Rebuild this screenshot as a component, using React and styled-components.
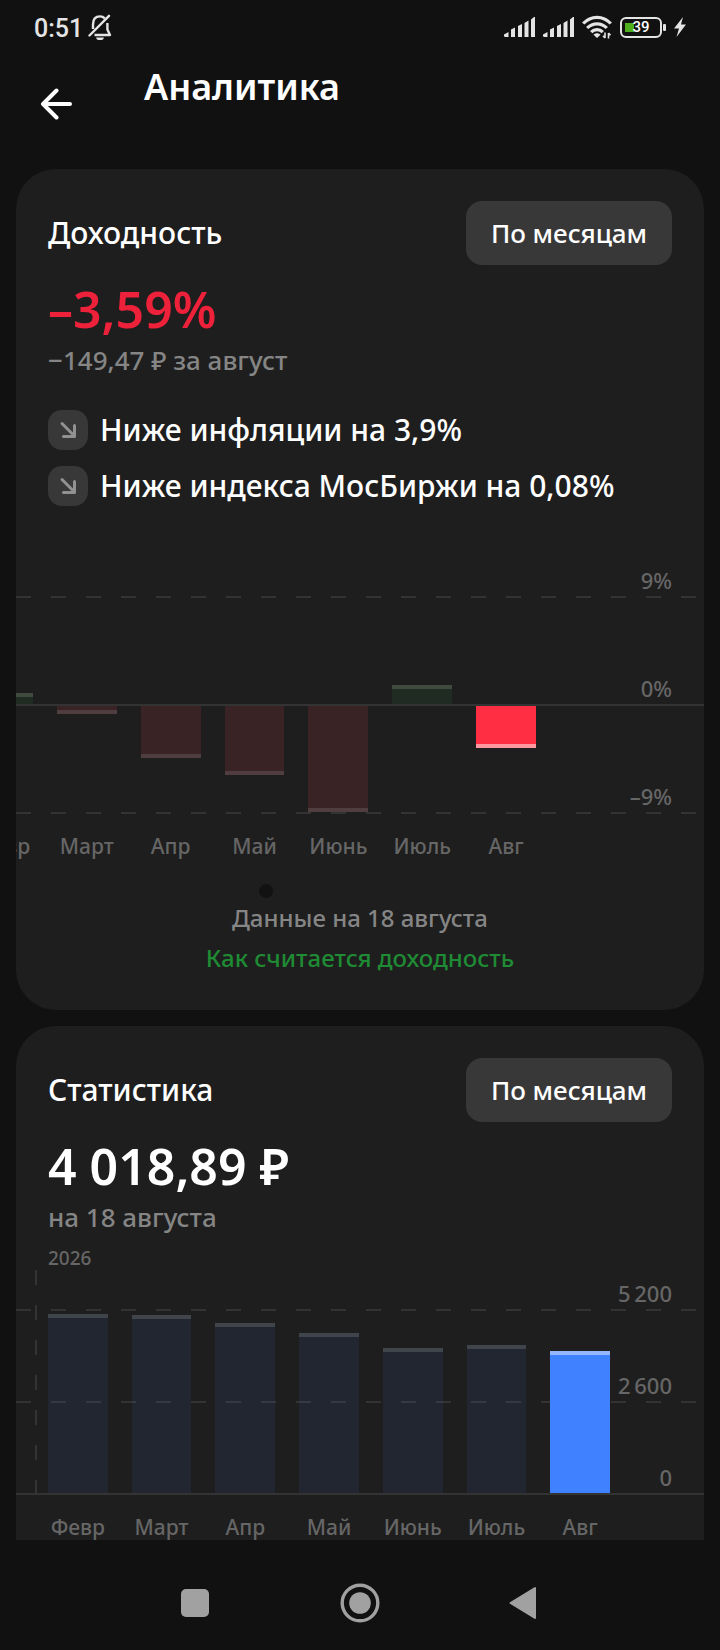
import styled, { createGlobalStyle } from 'styled-components';

const GlobalStyle = createGlobalStyle`
    * {
        box-sizing: border-box;
    }

    body {
        margin: 0;
        background: #111111;
        color: #ffffff;
        font-family: 'Noto Sans', 'Open Sans', sans-serif;
    }

    h1, h2, p {
        margin: 0;
    }

    button {
        padding: 0;
        border: 0;
        background: none;
        color: inherit;
        font-family: inherit;
        cursor: pointer;
    }
`;

const Screen = styled.div`
    display: flex;
    flex-direction: column;
    height: 100vh;
    overflow: hidden;
`;

const StatusBar = styled.div`
    display: flex;
    flex: none;
    align-items: center;
    justify-content: space-between;
    height: 54px;
    padding: 0 34px;
    color: #e4e4e4;
    font-family: Roboto, sans-serif;
`;

const StatusGroup = styled.div`
    display: flex;
    align-items: center;
    gap: ${({ $gap }) => $gap}px;
`;

const Clock = styled.span`
    font-size: 25px;
    font-weight: 500;
    line-height: 28px;
    padding-top: 4px;
`;

const BatteryLevel = styled.span`
    display: flex;
    align-items: center;
    justify-content: center;
    width: 42px;
    height: 21px;
    border: 2px solid #e4e4e4;
    border-radius: 6px;
    background: linear-gradient(#4fae1c, #4fae1c) 3px 4px / 9px 9px no-repeat;
    color: #ffffff;
    font-size: 15px;
    font-weight: 500;
    line-height: 17px;
`;

const Battery = styled.div`
    display: flex;
    align-items: center;
    gap: 1px;

    &::after {
        content: '';
        width: 3px;
        height: 7px;
        border-radius: 1px;
        background: #e4e4e4;
    }
`;

const Header = styled.header`
    display: flex;
    flex: none;
    height: 115px;
    padding: 0 32px;
`;

const BackButton = styled.button`
    display: flex;
    align-items: center;
    justify-content: center;
    width: 48px;
    height: 100px;
`;

const PageTitle = styled.h1`
    padding: 13px 0 0 64px;
    font-size: 36px;
    font-weight: 600;
    line-height: 40px;
`;

const Content = styled.main`
    display: flex;
    flex: 1;
    flex-direction: column;
    gap: 16px;
    min-height: 0;
    padding: 0 16px;
    overflow-y: auto;
    scrollbar-width: none;
`;

const Card = styled.section`
    flex: none;
    padding: 32px 0;
    border-radius: 40px;
    background: #1e1e1e;
    overflow: hidden;
`;

const CardHeader = styled.div`
    display: flex;
    align-items: center;
    justify-content: space-between;
    margin-bottom: 16px;
    padding: 0 32px;
`;

const CardTitle = styled.h2`
    font-size: 30px;
    font-weight: 500;
    line-height: 40px;
`;

const PeriodButton = styled.button`
    min-width: 206px;
    height: 64px;
    padding: 0 24px;
    border-radius: 16px;
    background: #383838;
    font-size: 26px;
    font-weight: 500;
`;

const Amount = styled.p`
    padding: 0 32px;
    color: ${({ $negative }) => ($negative ? '#ed2139' : '#ffffff')};
    font-size: 50px;
    font-weight: 600;
    line-height: 56px;
`;

const AmountNote = styled.p`
    margin-top: 6px;
    padding: 0 32px;
    color: #858585;
    font-size: 26px;
    font-weight: 500;
    line-height: 34px;
`;

const Comparisons = styled.ul`
    display: flex;
    flex-direction: column;
    gap: 16px;
    margin: 33px 0 58px;
    padding: 0 32px;
    list-style: none;
`;

const Comparison = styled.li`
    display: flex;
    align-items: center;
    gap: 12px;
    font-size: 30px;
    font-weight: 500;
    line-height: 40px;
`;

const TrendBadge = styled.span`
    display: flex;
    flex: none;
    align-items: center;
    justify-content: center;
    width: 40px;
    height: 40px;
    border-radius: 14px;
    background: #383838;
`;

// Axis, year divider and bars share one grid cell and lie over each other
const Plot = styled.div`
    display: grid;

    > * {
        grid-area: 1 / 1;
    }
`;

const Axis = styled.div`
    display: flex;
    flex-direction: column;
`;

const AxisRow = styled.div`
    display: flex;
    align-items: flex-end;
    justify-content: flex-end;
    height: ${({ $height }) => $height}px;
    padding: 0 32px 4px;
    background: ${({ $solid }) => ($solid
        ? 'linear-gradient(#333333, #333333)'
        : 'repeating-linear-gradient(90deg, #333333 0 15px, transparent 15px 35px)')}
        0 100% / 100% 2px no-repeat;
    color: #666666;
    font-size: 22px;
    font-weight: 500;
    line-height: 28px;
`;

const YearLabel = styled.p`
    margin-top: 12px;
    padding: 0 32px;
    color: #666666;
    font-size: 19px;
    font-weight: 500;
    line-height: 24px;
`;

const YearDivider = styled.div`
    width: 2px;
    margin-left: 19px;
    background: repeating-linear-gradient(#333333 0 15px, transparent 15px 35px);
`;

const Columns = styled.div`
    display: grid;
    grid-template-columns: repeat(7, 1fr);
    gap: 24px;
    margin: ${({ $scrolled }) => ($scrolled ? '0 168px 0 -43px' : '0 94px 0 32px')};
`;

const Column = styled.div`
    display: grid;
    grid-template-rows: ${({ $rows }) => $rows};
`;

const barColors = {
    gain: { fill: '#202c23', edge: '#3e4b3e' },
    loss: { fill: '#392325', edge: '#4f3d40' },
    lossActive: { fill: '#ff2e43', edge: '#ff97a1' },
    value: { fill: 'rgba(70, 120, 220, 0.10)', edge: '#40444b' },
    valueActive: { fill: '#4081ff', edge: '#94b6fb' },
};

const Bar = styled.div`
    grid-row: ${({ $down }) => ($down ? 3 : 1)};
    align-self: ${({ $down }) => ($down ? 'start' : 'end')};
    border-style: solid;
    border-color: ${({ $kind }) => barColors[$kind].edge};
    border-width: ${({ $down }) => ($down ? '0 0 4px' : '4px 0 0')};
    background: ${({ $kind }) => barColors[$kind].fill} padding-box;
`;

const Months = styled(Columns)`
    padding-top: 20px;
    color: #666666;
    font-size: 21px;
    font-weight: 500;
    line-height: 24px;
`;

const Month = styled.span`
    display: flex;
    justify-content: center;
    min-width: 0;
    white-space: nowrap;
`;

const PagerDot = styled.div`
    width: 14px;
    height: 14px;
    margin: 26px 0 0 243px;
    border-radius: 50%;
    background: #121212;
`;

const CardFooter = styled.div`
    display: flex;
    flex-direction: column;
    align-items: center;
    min-height: 80px;
    font-size: 24px;
    font-weight: 500;
    line-height: 40px;
`;

const FooterNote = styled.p`
    color: #858585;
`;

const FooterLink = styled.a`
    color: #1f8b34;
    text-decoration: none;
`;

const NavBar = styled.nav`
    display: flex;
    flex: none;
    justify-content: center;
    height: 110px;
    padding-top: 16px;
`;

const NavButton = styled.button`
    display: flex;
    align-items: center;
    justify-content: center;
    width: 165px;
    height: 94px;
    color: #a1a1a1;
`;

const BellOffIcon = () => (
    <svg width="24" height="26" viewBox="0 0 24 26" fill="none" stroke="currentColor" strokeWidth="2.4" strokeLinejoin="round">
        <path d="M5 15V10.5C5 5.5 7.5 2.4 12 2.4c2 0 3.5.6 4.8 1.9" />
        <path d="M19.4 9v6.5l2.6 5.5H6.5" />
        <path d="M1.5 21.5 21 1.8" strokeLinecap="round" />
        <path d="M8.2 23.4h7.6a3.8 2.6 0 0 1-7.6 0z" fill="currentColor" stroke="none" />
    </svg>
);

const SignalIcon = () => (
    <svg width="31" height="20" viewBox="0 0 31 20" fill="currentColor">
        <path d="M0 19.2V17.5L4.500 15v5H1zM7 20v-7.500L11 10.500V20zM14 20V9l4-2v13zM20.500 20V6l4-2.500V20zM27 20V2.500L30 0h1v20z" />
    </svg>
);

const WifiIcon = () => (
    <svg width="30" height="24" viewBox="0 0 30 24" fill="none" stroke="currentColor" strokeWidth="3.2">
        <path d="M1.2 8.5C9 .3 21 .3 28.8 8.5" />
        <path d="M5.2 13c5.4-5.6 14.2-5.6 19.6 0" />
        <path d="M9.2 17.2c3.2-3.4 8.4-3.4 11.6 0" />
        <path d="m15 23-3.5-3.3c1.8-2 5.2-2 7 0z" fill="currentColor" stroke="none" />
        <path d="M23 17.5v5.5m-2-2.200 2 2.200M26.500 23.500V18m2 2.200-2-2.200" strokeWidth="1.6" />
    </svg>
);

const BoltIcon = () => (
    <svg width="12" height="20" viewBox="0 0 12 20" fill="currentColor">
        <path d="M9 0 0 11.500h5L2.500 20 12 7.500H7z" />
    </svg>
);

const BackIcon = () => (
    <svg width="32" height="32" viewBox="0 0 32 32" fill="none" stroke="currentColor" strokeWidth="4" strokeLinecap="round" strokeLinejoin="round">
        <path d="M30 16H3M16.500 2.500 3 16l13.500 13.500" />
    </svg>
);

const TrendDownIcon = () => (
    <svg width="18" height="18" viewBox="0 0 18 18" fill="none" stroke="#919191" strokeWidth="3" strokeLinecap="round" strokeLinejoin="round">
        <path d="M3 2.500 15.500 15M15.500 4.500V15.500H4.500" />
    </svg>
);

const yields = [
    { month: 'Февр', value: 1 },
    { month: 'Март', value: -0.75 },
    { month: 'Апр', value: -4.42 },
    { month: 'Май', value: -5.83 },
    { month: 'Июнь', value: -8.92 },
    { month: 'Июль', value: 1.67 },
    { month: 'Авг', value: -3.59 },
];

const balances = [
    { month: 'Февр', value: 5087 },
    { month: 'Март', value: 5059 },
    { month: 'Апр', value: 4833 },
    { month: 'Май', value: 4550 },
    { month: 'Июнь', value: 4126 },
    { month: 'Июль', value: 4211 },
    { month: 'Авг', value: 4018.89 },
];

// The axis line is 2px thick, so a bar starts 1px away from the real zero
const barHeight = (value, max, size) => Math.ceil(Math.abs(value) / max * size - 0.1) - 1;

const yieldKind = ({ month, value }) => {
    if (value > 0) return 'gain';
    return month === 'Авг' ? 'lossActive' : 'loss';
};

const YieldChart = () => (
    <>
        <Plot>
            <Axis>
                <AxisRow $height={34}>9%</AxisRow>
                <AxisRow $height={108} $solid>0%</AxisRow>
                <AxisRow $height={108}>–9%</AxisRow>
            </Axis>
            <Columns $scrolled>
                {yields.map((item) => (
                    <Column key={item.month} $rows="140px 2px 108px">
                        <Bar
                            $kind={yieldKind(item)}
                            $down={item.value < 0}
                            style={{ height: barHeight(item.value, 9, 108) }}
                        />
                    </Column>
                ))}
            </Columns>
        </Plot>
        <Months $scrolled>
            {yields.map(({ month }) => <Month key={month}>{month}</Month>)}
        </Months>
    </>
);

const BalanceChart = () => (
    <>
        <YearLabel>2026</YearLabel>
        <Plot>
            <Axis>
                <AxisRow $height={41}>5{'\u2009'}200</AxisRow>
                <AxisRow $height={92}>2{'\u2009'}600</AxisRow>
                <AxisRow $height={92} $solid>0</AxisRow>
            </Axis>
            <YearDivider />
            <Columns>
                {balances.map(({ month, value }) => (
                    <Column key={month} $rows="223px 2px">
                        <Bar
                            $kind={month === 'Авг' ? 'valueActive' : 'value'}
                            style={{ height: barHeight(value, 5200, 184) }}
                        />
                    </Column>
                ))}
            </Columns>
        </Plot>
        <Months>
            {balances.map(({ month }) => <Month key={month}>{month}</Month>)}
        </Months>
    </>
);

const App = () => {
    return (<>
        <GlobalStyle />
        <Screen>
            <StatusBar>
                <StatusGroup $gap={5}>
                    <Clock>0:51</Clock>
                    <BellOffIcon />
                </StatusGroup>
                <StatusGroup $gap={8}>
                    <SignalIcon />
                    <SignalIcon />
                    <WifiIcon />
                    <Battery>
                        <BatteryLevel>39</BatteryLevel>
                    </Battery>
                    <BoltIcon />
                </StatusGroup>
            </StatusBar>
            <Header>
                <BackButton aria-label="Назад">
                    <BackIcon />
                </BackButton>
                <PageTitle>Аналитика</PageTitle>
            </Header>
            <Content>
                <Card>
                    <CardHeader>
                        <CardTitle>Доходность</CardTitle>
                        <PeriodButton>По месяцам</PeriodButton>
                    </CardHeader>
                    <Amount $negative>–3,59%</Amount>
                    <AmountNote>−149,47 ₽ за август</AmountNote>
                    <Comparisons>
                        <Comparison>
                            <TrendBadge><TrendDownIcon /></TrendBadge>
                            Ниже инфляции на 3,9%
                        </Comparison>
                        <Comparison>
                            <TrendBadge><TrendDownIcon /></TrendBadge>
                            Ниже индекса МосБиржи на 0,08%
                        </Comparison>
                    </Comparisons>
                    <YieldChart />
                    <PagerDot />
                    <CardFooter>
                        <FooterNote>Данные на 18 августа</FooterNote>
                        <FooterLink href="#yield">Как считается доходность</FooterLink>
                    </CardFooter>
                </Card>
                <Card>
                    <CardHeader>
                        <CardTitle>Статистика</CardTitle>
                        <PeriodButton>По месяцам</PeriodButton>
                    </CardHeader>
                    <Amount>4 018,89 ₽</Amount>
                    <AmountNote>на 18 августа</AmountNote>
                    <BalanceChart />
                    <CardFooter />
                </Card>
            </Content>
            <NavBar>
                <NavButton aria-label="Недавние приложения">
                    <svg width="28" height="28" viewBox="0 0 28 28" fill="currentColor">
                        <rect width="28" height="28" rx="5" />
                    </svg>
                </NavButton>
                <NavButton aria-label="Домой">
                    <svg width="40" height="40" viewBox="0 0 40 40" fill="currentColor">
                        <circle cx="20" cy="20" r="17.8" fill="none" stroke="currentColor" strokeWidth="3.4" />
                        <circle cx="20" cy="20" r="10.8" />
                    </svg>
                </NavButton>
                <NavButton aria-label="Назад">
                    <svg width="40" height="40" viewBox="0 0 40 40" fill="currentColor" stroke="currentColor" strokeWidth="2" strokeLinejoin="round">
                        <path d="M5.5 20 30 5v30z" />
                    </svg>
                </NavButton>
            </NavBar>
        </Screen>
    </>);
};
export default App;
